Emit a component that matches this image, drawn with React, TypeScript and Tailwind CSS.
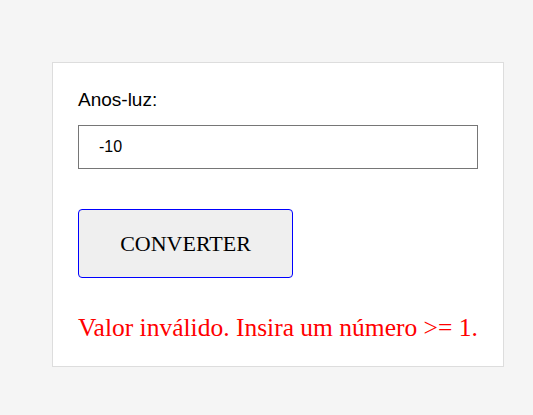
import { useState } from 'react'

export default function App() {
  const [value, setValue] = useState('-10')

  return (
    <div className="min-h-[415px] w-full bg-[#f5f5f5] pt-[62px] pl-[52px]">
      <div className="flex w-[452px] flex-col items-start border border-[#dddddd] bg-white px-[25px] pt-[26px] pb-[24px]">
        <label className="mb-[14px] block h-[22px] font-['Liberation_Sans',Arial,sans-serif] text-[19px] leading-[22px] text-black">
          Anos-luz:
        </label>
        <input
          type="number"
          value={value}
          onChange={(e) => setValue(e.target.value)}
          className="block h-[44px] w-full border border-[#767676] bg-white pl-[20px] font-['Liberation_Sans',Arial,sans-serif] text-[16px] text-black outline-none [appearance:textfield] [&::-webkit-inner-spin-button]:appearance-none"
        />
        <button className="mt-[40px] flex h-[69px] w-[215px] items-center justify-center rounded-[4px] border border-[#0000ff] bg-[#efefef] font-['Liberation_Serif','Times_New_Roman',serif] text-[22px] text-black">
          CONVERTER
        </button>
        <p className="mt-[35px] whitespace-nowrap font-['Liberation_Serif','Times_New_Roman',serif] text-[25.5px] leading-[29px] text-[#ff0000]">
          Valor inválido. Insira um número &gt;= 1.
        </p>
      </div>
    </div>
  )
}
